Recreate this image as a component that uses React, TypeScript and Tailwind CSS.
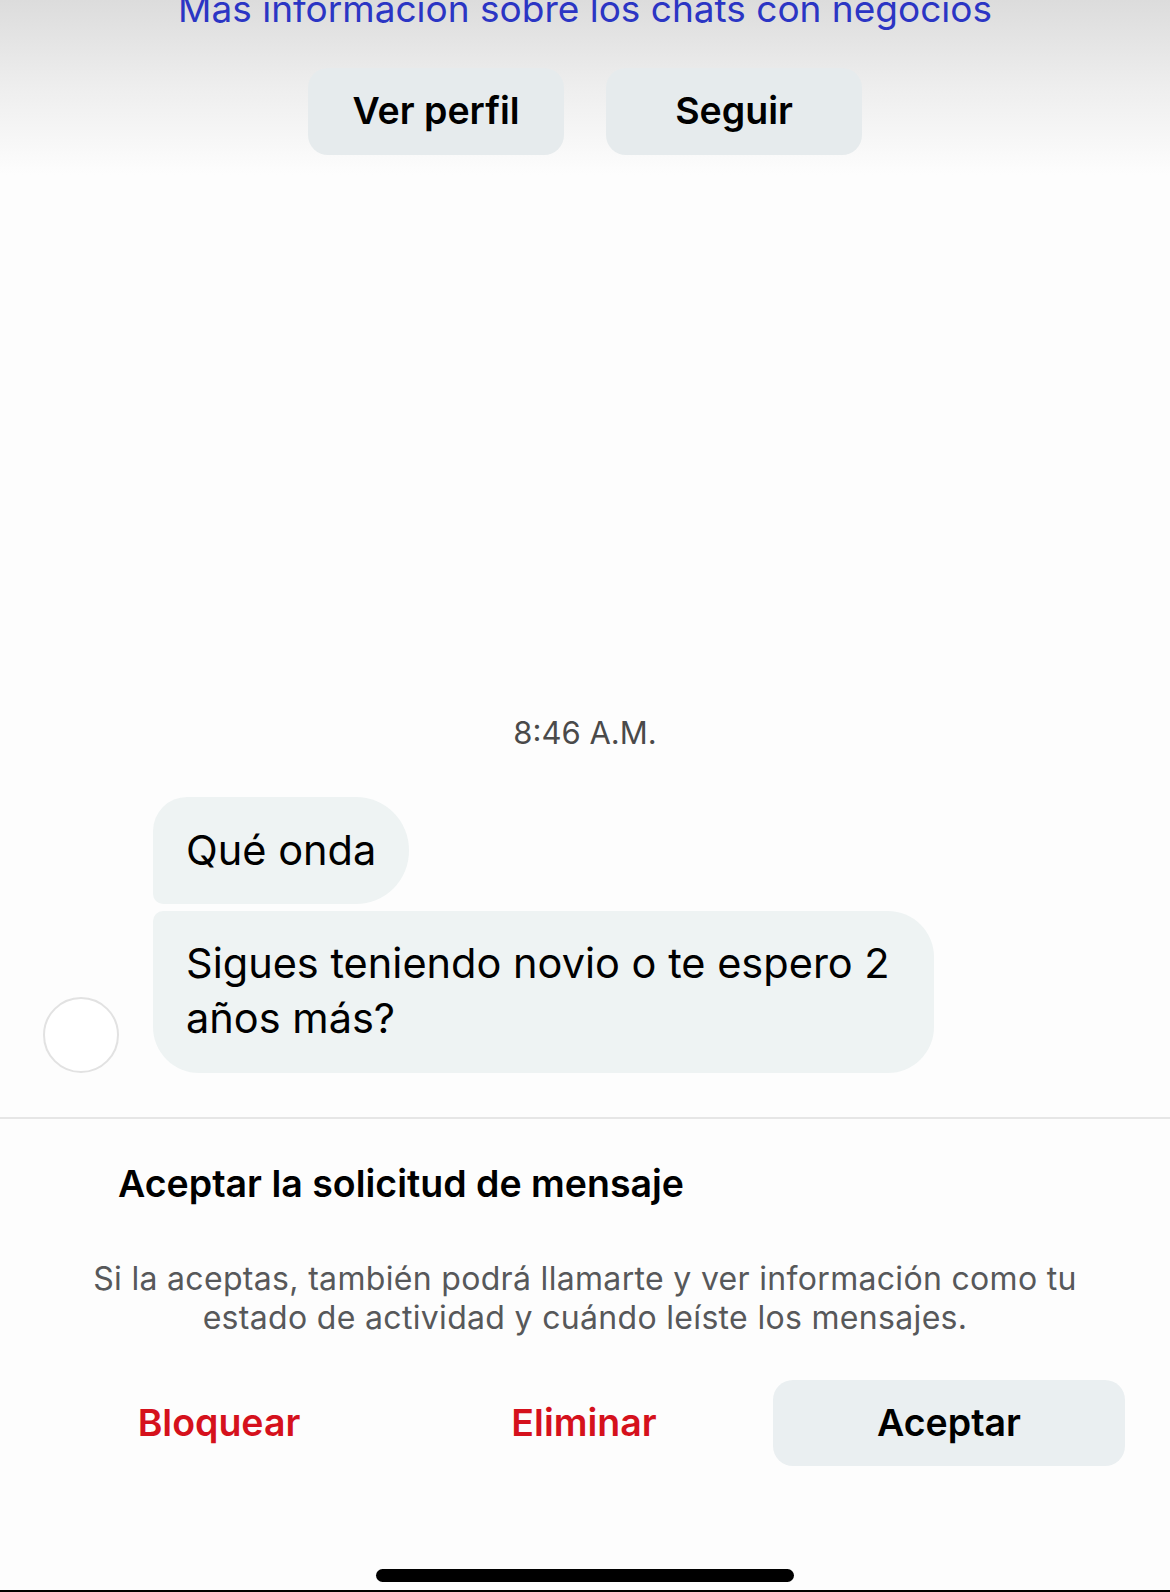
export default function App() {
  return (
    <div className="w-[1170px] h-[1592px] overflow-hidden bg-[#fdfdfd] flex flex-col font-['Inter','Liberation_Sans',sans-serif] text-black">
      {/* Header with business chat link and profile actions */}
      <div className="h-[175px] bg-gradient-to-b from-[#dcdcdc] via-[#eeeeee] to-[#fdfdfd] flex flex-col items-center">
        <p className="-mt-[10px] text-[37px] leading-none text-[#2b35c4] whitespace-nowrap">
          Mas informacion sobre los chats con negocios
        </p>
        <div className="mt-[41px] flex gap-[42px]">
          <button className="w-[256px] h-[87px] rounded-[20px] bg-[#e6ebed] text-[37.5px] font-semibold">
            Ver perfil
          </button>
          <button className="w-[256px] h-[87px] rounded-[20px] bg-[#e6ebed] text-[37.5px] font-semibold">
            Seguir
          </button>
        </div>
      </div>

      {/* Timestamp */}
      <p className="mt-[538px] h-[40px] leading-[40px] text-center text-[31px] text-[#4a4a4a]">8:46 A.M.</p>

      {/* Messages */}
      <div className="mt-[44px] pl-[43px] flex items-end gap-[34px]">
        <div className="w-[76px] h-[76px] rounded-full border-[2px] border-[#e2e2e2] bg-white shrink-0" />
        <div className="flex flex-col items-start gap-[7px]">
          <div className="h-[107px] px-[33px] flex items-center bg-[#eef3f3] rounded-tl-[34px] rounded-tr-[53px] rounded-br-[53px] rounded-bl-[10px] text-[41.5px]">
            Qué onda
          </div>
          <div className="w-[781px] pl-[33px] pt-[25px] pb-[27px] bg-[#eef3f3] rounded-tl-[10px] rounded-tr-[46px] rounded-br-[46px] rounded-bl-[46px] text-[41.5px] leading-[55px]">
            <span className="block whitespace-nowrap">Sigues teniendo novio o te espero 2</span>
            <span className="block whitespace-nowrap">años más?</span>
          </div>
        </div>
      </div>

      <div className="mt-[44px] h-[2px] bg-[#e6e6e6]" />

      {/* Message request sheet */}
      <h2 className="mt-[45px] pl-[118px] h-[40px] leading-[40px] text-[37.5px] font-semibold whitespace-nowrap">
        Aceptar la solicitud de mensaje
      </h2>
      <p className="mt-[55px] text-center text-[32px] leading-[39px] tracking-[0.01em] text-[#57585a]">
        Si la aceptas, también podrá llamarte y ver información como tu
        <br />
        estado de actividad y cuándo leíste los mensajes.
      </p>

      <div className="mt-[43px] pl-[43px] pr-[45px] grid grid-cols-3 gap-[13px]">
        <button className="h-[86px] text-[37.5px] font-semibold text-[#d5111c]">Bloquear</button>
        <button className="h-[86px] text-[37.5px] font-semibold text-[#d5111c]">Eliminar</button>
        <button className="h-[86px] rounded-[20px] bg-[#eaeff1] text-[37.5px] font-semibold">Aceptar</button>
      </div>

      <div className="mt-auto flex justify-center">
        <div className="w-[418px] h-[13px] rounded-full bg-black" />
      </div>
      <div className="mt-[8px] h-[2px] bg-black" />
    </div>
  );
}
